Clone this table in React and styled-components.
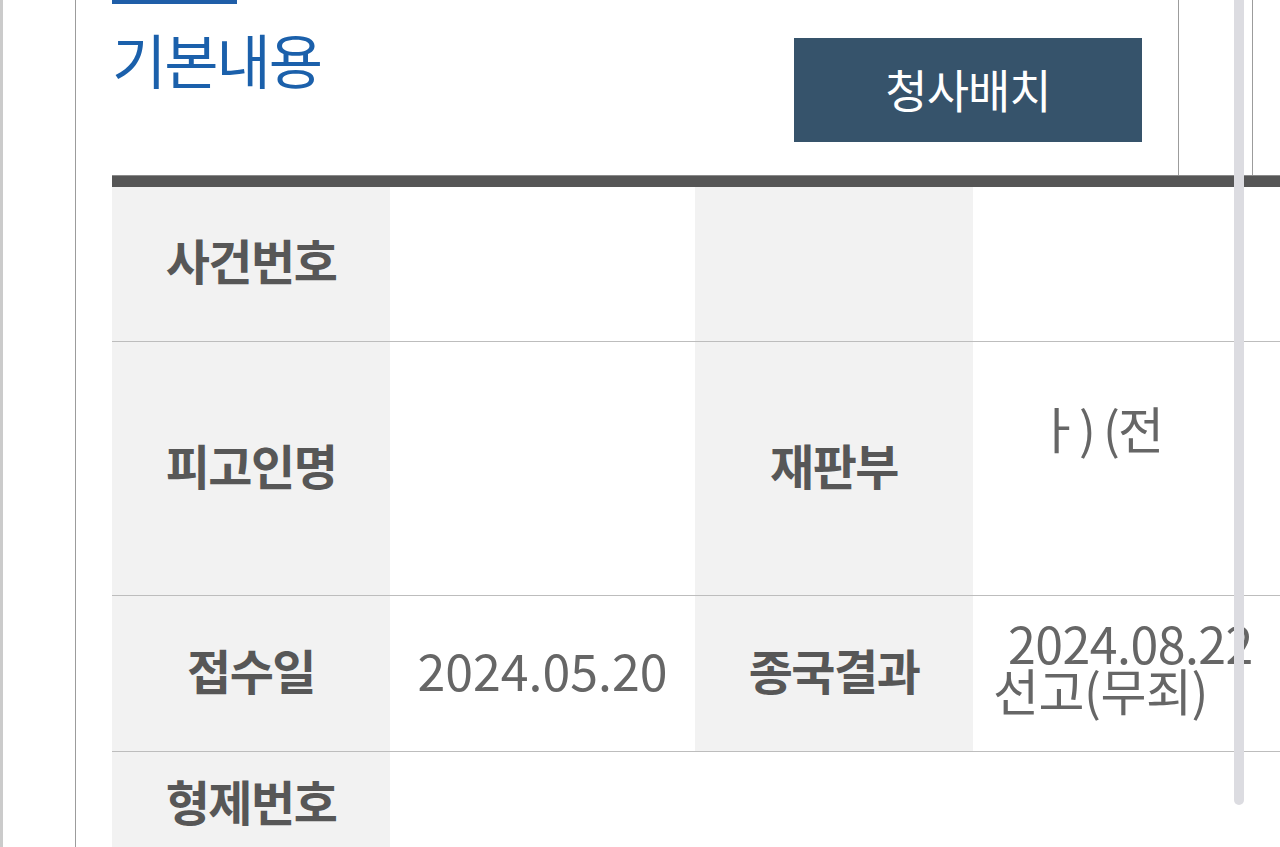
import React from 'react';
import styled, { createGlobalStyle } from 'styled-components';

const GlobalStyle = createGlobalStyle`
  html, body {
    margin: 0;
    padding: 0;
    background: #fff;
    overflow: hidden;
  }
  body {
    font-family: "Noto Sans CJK KR", "Noto Sans", sans-serif;
  }
`;

const Page = styled.div`
  position: relative;
  display: flex;
  width: 1280px;
  height: 847px;
  overflow: hidden;
  background: #fff;
`;

const Gutter = styled.div`
  flex: 0 0 75px;
  box-sizing: border-box;
  border-left: 3px solid #cbcbcb;
`;

const Card = styled.section`
  flex: 0 0 1104px;
  min-width: 0;
  box-sizing: border-box;
  border-left: 1px solid #9c9c9c;
  border-right: 1px solid #9c9c9c;
  padding: 0 36px;
`;

const Spacer = styled.div`
  flex: 0 0 73px;
`;

const SidePanel = styled.div`
  flex: 1;
  border-left: 1px solid #9c9c9c;
`;

const Header = styled.div`
  height: 176px;
  display: flex;
  justify-content: space-between;
  align-items: flex-start;
`;

const TitleBlock = styled.div`
  &::before {
    content: '';
    display: block;
    width: 125px;
    height: 4px;
    background: #1f5ea8;
  }
`;

const Title = styled.h2`
  margin: 15px 0 0;
  font-size: 59px;
  line-height: 80px;
  font-weight: 400;
  letter-spacing: -2px;
  color: #1b60ab;
`;

const PlanButton = styled.button`
  margin-top: 38px;
  width: 348px;
  height: 104px;
  border: 0;
  background: #36536b;
  color: #fff;
  font-family: inherit;
  font-size: 46px;
  letter-spacing: -1px;
  padding: 0 0 4px;
  cursor: pointer;
`;

const Table = styled.div`
  position: relative;
  z-index: 1;
  width: 1168px;
  display: grid;
  grid-template-columns: 278px 305px 278px 307px;
  border-top: 11px solid #565656;
  box-shadow: 0 -1px 0 #8a8a8a;
`;

const Cell = styled.div`
  height: ${({ $h }) => $h}px;
  box-sizing: border-box;
  padding-bottom: 10px;
  border-bottom: ${({ $last }) => ($last ? '0' : '1px solid #bdbdbd')};
  background: ${({ $label }) => ($label ? '#f2f2f2' : '#fff')};
  color: ${({ $label }) => ($label ? '#575757' : '#666')};
  font-size: ${({ $label }) => ($label ? '48px' : '50px')};
  font-weight: ${({ $label }) => ($label ? 700 : 400)};
  letter-spacing: ${({ $label }) => ($label ? '-1.5px' : '0')};
  display: flex;
  align-items: center;
  justify-content: ${({ $align }) => $align || 'center'};
  grid-column: ${({ $span }) => ($span ? `span ${$span}` : 'auto')};
`;

const Stacked = styled.div`
  line-height: 47px;
  padding-left: 20px;
  text-indent: 15px;
  margin-bottom: 6px;
  letter-spacing: -0.5px;
`;

const Cut = styled.span`
  padding-left: 62px;
  margin-bottom: 74px;
  letter-spacing: -2px;
`;

const ScrollThumb = styled.div`
  position: absolute;
  top: 0;
  left: 1234px;
  width: 10px;
  height: 805px;
  border-radius: 0 0 5px 5px;
  background: #dcdce1;
  z-index: 2;
`;

const rows = [
  { h: 155, cells: [{ label: '사건번호' }, { value: '' }, { label: '' }, { value: '' }] },
  {
    h: 254,
    cells: [
      { label: '피고인명' },
      { value: '' },
      { label: '재판부' },
      { value: <Cut>ㅏ) (전</Cut>, align: 'flex-start' },
    ],
  },
  {
    h: 156,
    cells: [
      { label: '접수일' },
      { value: '2024.05.20' },
      { label: '종국결과' },
      {
        value: (
          <Stacked>
            2024.08.22
            <br />
            선고(무죄)
          </Stacked>
        ),
        align: 'flex-start',
      },
    ],
  },
  { h: 106, last: true, cells: [{ label: '형제번호' }, { value: '', span: 3 }] },
];

const App = () => {
  return (
    <>
      <GlobalStyle />
      <Page>
        <Gutter />
        <Card>
          <Header>
            <TitleBlock>
              <Title>기본내용</Title>
            </TitleBlock>
            <PlanButton>청사배치</PlanButton>
          </Header>
          <Table>
            {rows.map((row, i) =>
              row.cells.map((c, j) => (
                <Cell
                  key={`${i}-${j}`}
                  $h={row.h}
                  $last={row.last}
                  $label={'label' in c}
                  $align={c.align}
                  $span={c.span}
                >
                  {'label' in c ? c.label : c.value}
                </Cell>
              ))
            )}
          </Table>
        </Card>
        <Spacer />
        <SidePanel />
        <ScrollThumb />
      </Page>
    </>
  );
};

export default App;
